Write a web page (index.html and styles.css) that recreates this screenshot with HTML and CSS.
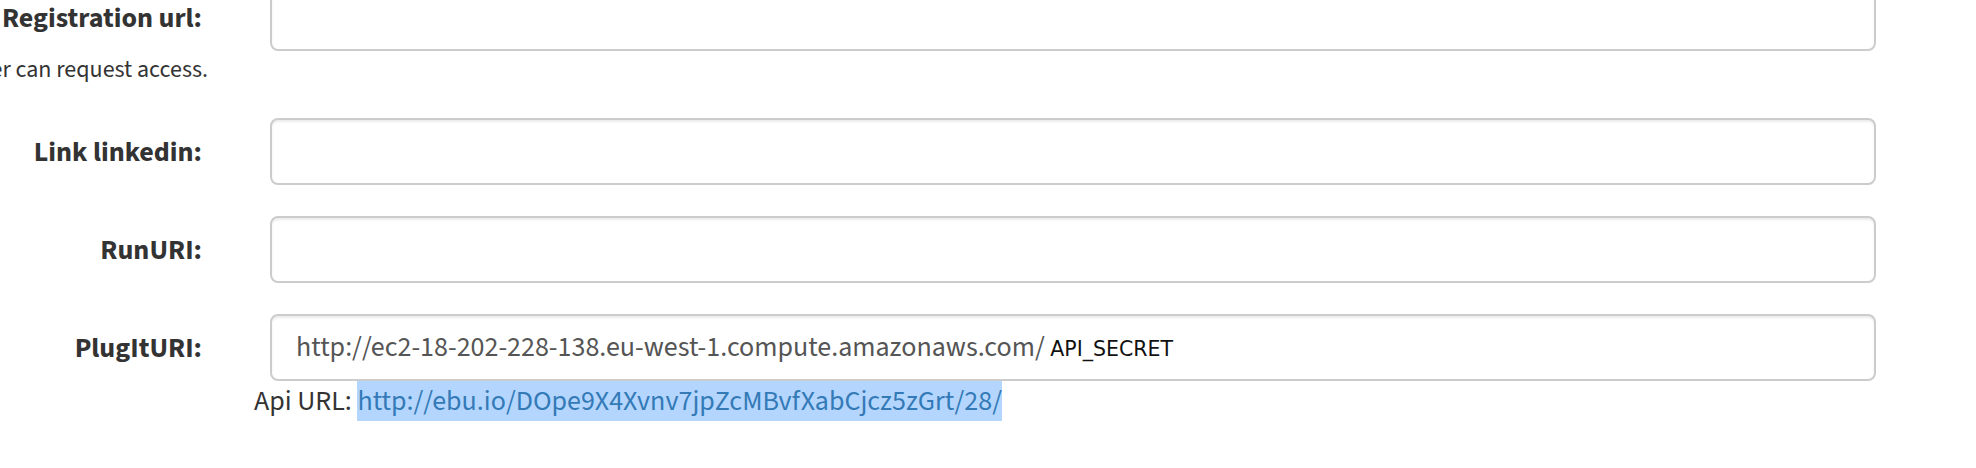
FILE: index.html
```html
<!DOCTYPE html>
<html lang="en">
<head>
<meta charset="utf-8">
<title>Project settings</title>
<link rel="stylesheet" href="styles.css">
</head>
<body>
<form class="form">
  <div class="row row-first">
    <div class="label-col">
      <label class="control-label">Registration url:</label>
      <span class="help-block">Url where a user can request access.</span>
    </div>
    <div class="input-col">
      <div class="form-control"></div>
    </div>
  </div>
  <div class="row">
    <div class="label-col">
      <label class="control-label">Link linkedin:</label>
    </div>
    <div class="input-col">
      <div class="form-control"></div>
    </div>
  </div>
  <div class="row">
    <div class="label-col">
      <label class="control-label">RunURI:</label>
    </div>
    <div class="input-col">
      <div class="form-control"></div>
    </div>
  </div>
  <div class="row">
    <div class="label-col">
      <label class="control-label">PlugItURI:</label>
    </div>
    <div class="input-col">
      <div class="form-control"><span class="value">http://ec2-18-202-228-138.eu-west-1.compute.amazonaws.com/</span> <span class="secret">API_SECRET</span></div>
      <div class="api-url">Api URL: <a class="api-link" href="#">http://ebu.io/DOpe9X4Xvnv7jpZcMBvfXabCjcz5zGrt/28/</a></div>
    </div>
  </div>
</form>
</body>
</html>
```
FILE: styles.css
```css
html, body {
  margin: 0;
  padding: 0;
  background: #fff;
}

body {
  font-family: "Source Sans 3", "Lato", "Liberation Sans", sans-serif;
  font-size: 28px;
  line-height: 40px;
  color: #333;
  overflow: hidden;
}

.form {
  margin: -16px 0 0 0;
}

.row {
  display: flex;
  align-items: flex-start;
  margin-bottom: 31px;
}

.row-first {
  margin-bottom: 28px;
}

.label-col {
  width: 202px;
  flex: none;
  display: flex;
  flex-direction: column;
  align-items: flex-end;
}

.control-label {
  display: block;
  padding-top: 14px;
  font-weight: 700;
  white-space: nowrap;
  text-align: right;
}

.help-block {
  display: block;
  margin-top: 12px;
  margin-right: -6px;
  font-size: 24px;
  line-height: 40px;
  white-space: nowrap;
  color: #333;
}

.input-col {
  margin-left: 68px;
  width: 1606px;
  flex: none;
}

.form-control {
  box-sizing: border-box;
  height: 67px;
  padding: 11px 24px;
  border: 2px solid #ccc;
  border-radius: 8px;
  box-shadow: inset 0 2px 2px rgba(0, 0, 0, 0.075);
  background: #fff;
  color: #555;
  white-space: nowrap;
}

.secret {
  font-family: "DejaVu Sans", sans-serif;
  font-size: 20.5px;
  color: #111;
}

.api-url {
  margin-left: -16px;
  color: #333;
  white-space: nowrap;
}

.api-link {
  color: #337ab7;
  text-decoration: none;
  background: #b4d6fe;
}
```
